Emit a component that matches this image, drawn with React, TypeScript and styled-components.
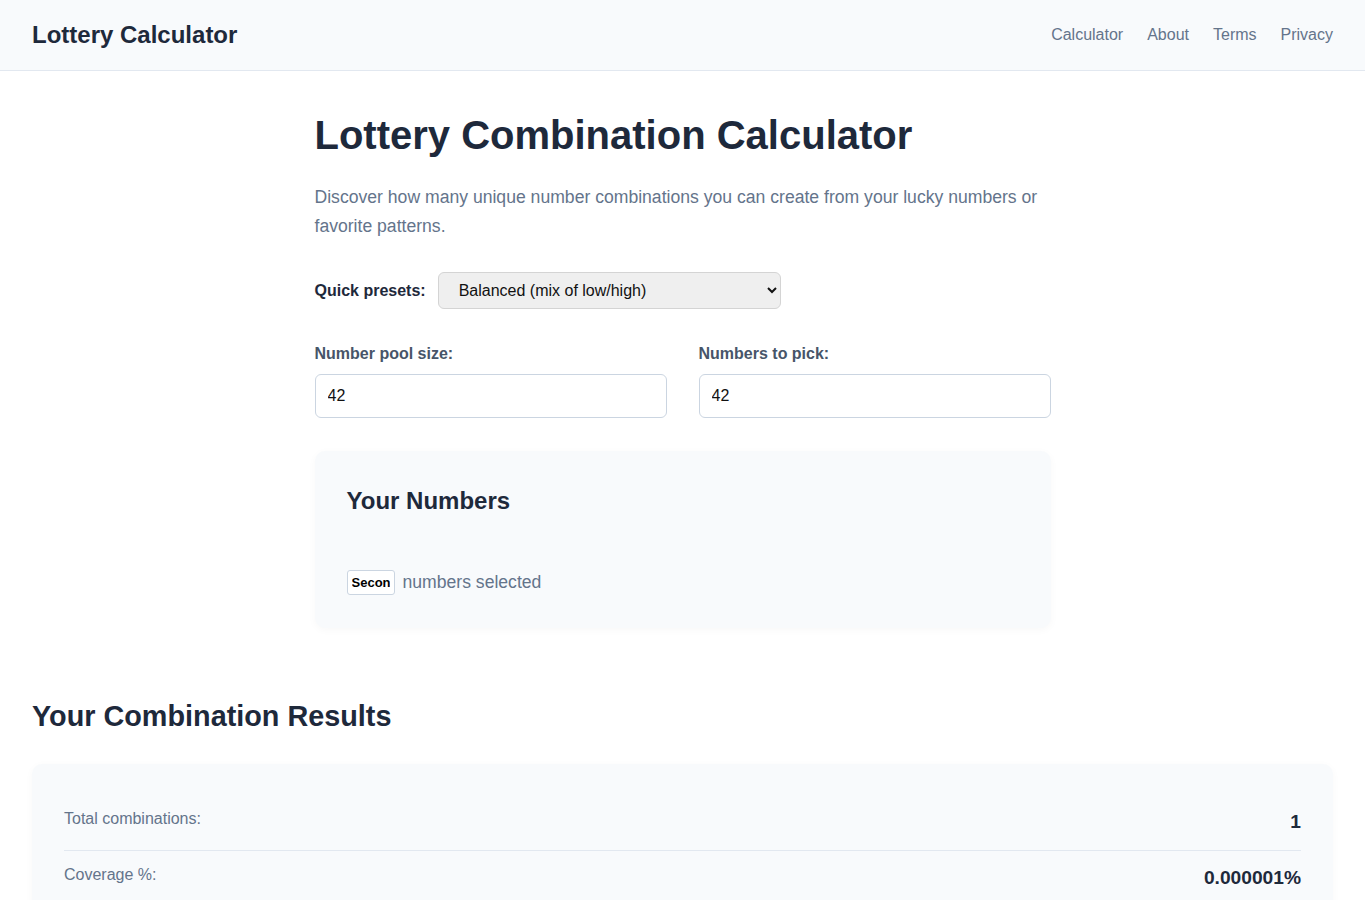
import React from "react";
import styled, { createGlobalStyle } from "styled-components";

const Global = createGlobalStyle`
  * { box-sizing: border-box; }
  body {
    margin: 0;
    font-family: "Liberation Sans", Arial, sans-serif;
    color: #1e293b;
    background: #ffffff;
  }
`;

const Header = styled.header`
  height: 71px;
  background: #f8fafc;
  border-bottom: 1px solid #e2e8f0;
  display: flex;
  align-items: center;
  justify-content: space-between;
  padding: 0 32px;
`;

const Brand = styled.div`
  font-size: 24px;
  font-weight: 700;
  color: #1e293b;
`;

const Nav = styled.nav`
  display: flex;
  gap: 24px;
`;

const NavLink = styled.a`
  font-size: 16px;
  color: #64748b;
  text-decoration: none;
`;

const Main = styled.main`
  max-width: 736px;
  margin: 0 auto;
  padding-top: 40px;
`;

const Title = styled.h1`
  font-size: 40px;
  font-weight: 700;
  margin: 0 0 24px;
  line-height: 1.2;
  color: #1e293b;
`;

const Lead = styled.p`
  font-size: 17.6px;
  line-height: 29px;
  color: #64748b;
  margin: 0 0 31px;
`;

const PresetRow = styled.div`
  display: flex;
  align-items: center;
  gap: 12px;
  margin-bottom: 36px;
`;

const Label = styled.label<{ $tone?: string }>`
  font-size: 16px;
  font-weight: 700;
  color: ${(p) => p.$tone ?? "#334155"};
`;

const Select = styled.select`
  width: 343px;
  height: 37px;
  font-family: "Liberation Sans", Arial, sans-serif;
  font-size: 16px;
  color: #111;
  background: #efefef;
  border: 1px solid #d4d4d4;
  border-radius: 6px;
  padding: 0 12px 0 16px;
`;

const FieldGrid = styled.div`
  display: grid;
  grid-template-columns: 1fr 1fr;
  gap: 32px;
  margin-bottom: 33px;
`;

const Field = styled.div`
  display: flex;
  flex-direction: column;
  gap: 11px;
`;

const Input = styled.input`
  height: 44px;
  width: 100%;
  border: 1px solid #cbd5e1;
  border-radius: 6px;
  padding: 0 12px;
  font-family: "Liberation Sans", Arial, sans-serif;
  font-size: 16px;
  color: #111;
  background: #fff;
`;

const Card = styled.section<{ $pad?: string }>`
  background: #f8fafc;
  border-radius: 10px;
  box-shadow: 0 2px 8px rgba(15, 23, 42, 0.03);
  padding: ${(p) => p.$pad ?? "32px"};
`;

const CardTitle = styled.h2`
  font-size: 24px;
  font-weight: 700;
  margin: 0 0 54px;
  line-height: 1.3;
  color: #1e293b;
`;

const SelectedLine = styled.div`
  display: flex;
  align-items: center;
  gap: 8px;
  font-size: 17.6px;
  color: #64748b;
`;

const CountBox = styled.input`
  width: 48px;
  height: 25px;
  border: 1px solid #cbd5e1;
  border-radius: 3px;
  padding: 0 4px;
  font-family: "Liberation Sans", Arial, sans-serif;
  font-size: 13px;
  font-weight: 700;
  color: #000;
  background: #fff;
`;

const Results = styled.section`
  padding: 71px 32px 0;
`;

const ResultsTitle = styled.h2`
  font-size: 28.8px;
  font-weight: 700;
  margin: 0 0 30px;
  line-height: 1.2;
  color: #1e293b;
`;

const Row = styled.div<{ $first?: boolean }>`
  display: flex;
  justify-content: space-between;
  align-items: flex-start;
  padding: ${(p) => (p.$first ? "20px 0 17px" : "13px 0 17px")};
  border-bottom: ${(p) => (p.$first ? "1px solid #e2e8f0" : "none")};
`;

const RowLabel = styled.span`
  font-size: 16px;
  line-height: 22px;
  color: #64748b;
`;

const RowValue = styled.span`
  font-size: 19.2px;
  line-height: 22px;
  font-weight: 700;
  color: #1e293b;
  margin-top: 3px;
`;

export default function App() {
  return (
    <>
      <Global />
      <Header>
        <Brand>Lottery Calculator</Brand>
        <Nav>
          <NavLink href="#">Calculator</NavLink>
          <NavLink href="#">About</NavLink>
          <NavLink href="#">Terms</NavLink>
          <NavLink href="#">Privacy</NavLink>
        </Nav>
      </Header>
      <Main>
        <Title>Lottery Combination Calculator</Title>
        <Lead>
          Discover how many unique number combinations you can create from your lucky numbers or
          favorite patterns.
        </Lead>
        <PresetRow>
          <Label $tone="#1e293b">Quick presets:</Label>
          <Select defaultValue="balanced">
            <option value="balanced">Balanced (mix of low/high)</option>
          </Select>
        </PresetRow>
        <FieldGrid>
          <Field>
            <Label $tone="#475569">Number pool size:</Label>
            <Input defaultValue="42" />
          </Field>
          <Field>
            <Label $tone="#475569">Numbers to pick:</Label>
            <Input defaultValue="42" />
          </Field>
        </FieldGrid>
        <Card $pad="34px 32px 33px">
          <CardTitle>Your Numbers</CardTitle>
          <SelectedLine>
            <CountBox defaultValue="Second" />
            numbers selected
          </SelectedLine>
        </Card>
      </Main>
      <Results>
        <ResultsTitle>Your Combination Results</ResultsTitle>
        <Card $pad="24px 32px 20px">
          <Row $first>
            <RowLabel>Total combinations:</RowLabel>
            <RowValue>1</RowValue>
          </Row>
          <Row>
            <RowLabel>Coverage %:</RowLabel>
            <RowValue>0.000001%</RowValue>
          </Row>
        </Card>
      </Results>
    </>
  );
}
